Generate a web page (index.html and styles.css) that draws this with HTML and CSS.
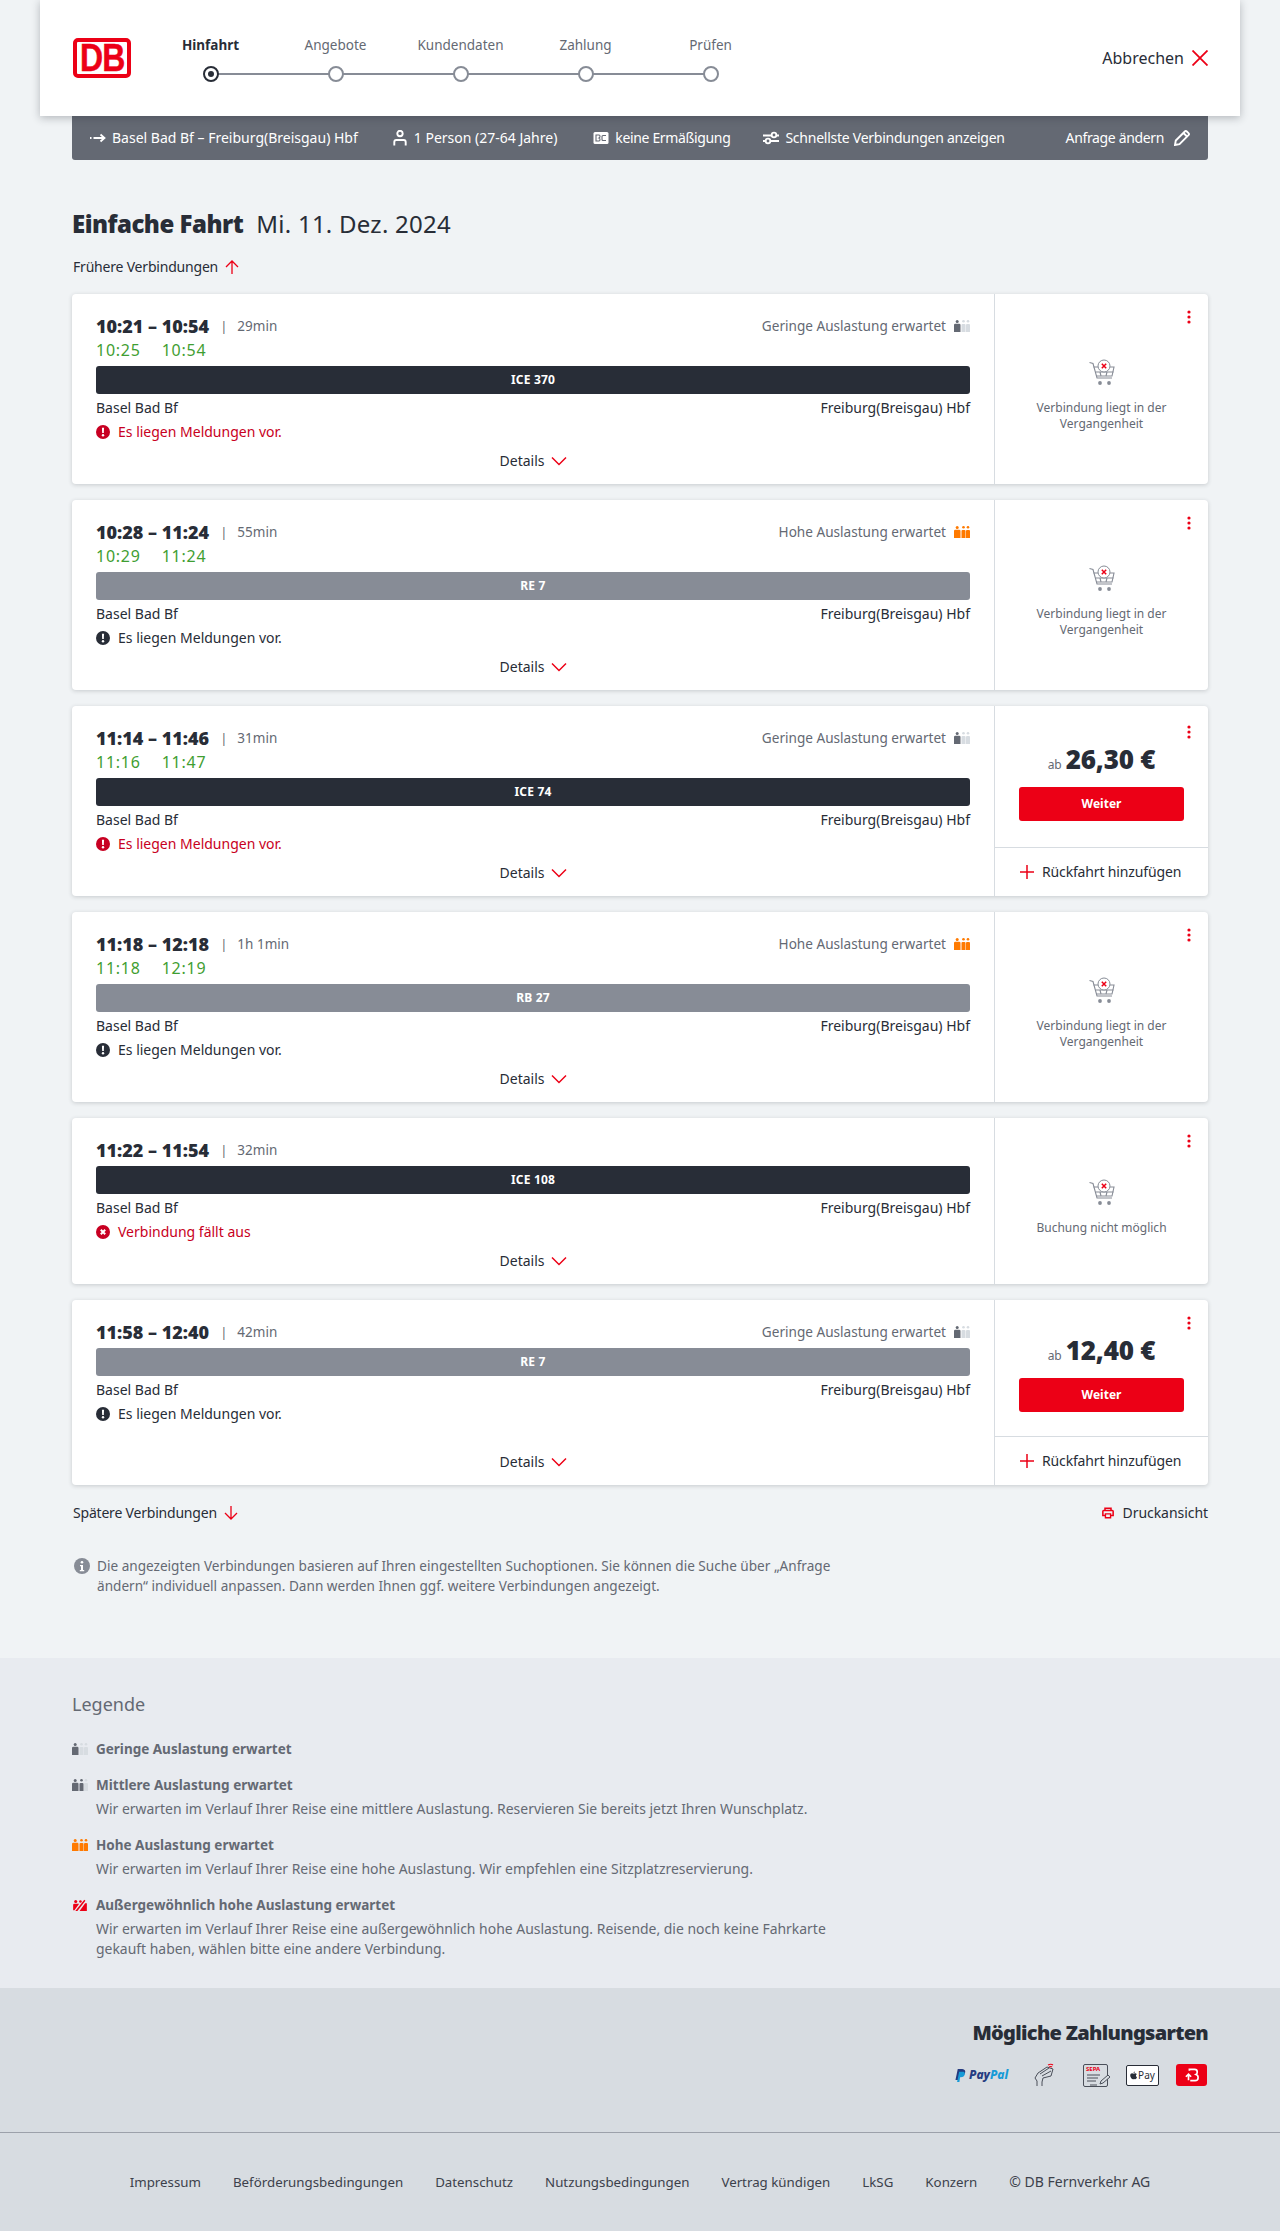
FILE: index.html
```html
<!DOCTYPE html>
<html lang="de">
<head>
<meta charset="utf-8">
<title>Einfache Fahrt</title>
<link rel="stylesheet" href="styles.css">
</head>
<body>
<svg class="defs" width="0" height="0" aria-hidden="true">
  <symbol id="occ" viewBox="0 0 16 12">
    <circle class="o1" cx="3.200" cy="1.500" r="1.500"/><path class="o1" d="M0 5q0-1.300 1.300-1.300h3.900Q6.500 3.700 6.500 5v7H0z"/>
    <circle class="o2" cx="9.500" cy="1.300" r="1.300"/><path class="o2" d="M7.500 5q0-1 1-1h2q1 0 1 1v7h-4z"/>
    <circle class="o3" cx="14" cy="1.300" r="1.300"/><path class="o3" d="M12 5q0-1 1-1h2q1 0 1 1v7h-4z"/>
  </symbol>
  <symbol id="chev" viewBox="0 0 16 10"><path d="M1 1.500l7 7 7-7" fill="none" stroke="#ec0016" stroke-width="1.500"/></symbol>
  <symbol id="kebab" viewBox="0 0 4 14"><circle cx="2" cy="2" r="1.600" fill="#ec0016"/><circle cx="2" cy="7" r="1.600" fill="#ec0016"/><circle cx="2" cy="12" r="1.600" fill="#ec0016"/></symbol>
  <symbol id="warn" viewBox="0 0 14 14"><circle cx="7" cy="7" r="7" fill="currentColor"/><path d="M5.900 2.800h2.200l-.3 5.200H6.200z" fill="#fff"/><circle cx="7" cy="10.200" r="1.200" fill="#fff"/></symbol>
  <symbol id="cancel" viewBox="0 0 14 14"><circle cx="7" cy="7" r="7" fill="currentColor"/><path d="M4.800 4.800l4.400 4.400m0-4.400L4.800 9.200" stroke="#fff" stroke-width="2"/></symbol>
  <symbol id="plus" viewBox="0 0 14 14"><path d="M7 0v14M0 7h14" stroke="#ec0016" stroke-width="1.500"/></symbol>
  <symbol id="cart" viewBox="0 0 26 26">
    <g fill="none" stroke="#878c96" stroke-width="1.100"><path d="M0.500 3.500l3.500 1 4 14.500h15"/><path d="M4.500 8h6m7 0h7.500l-2 9H7.500"/><path d="M6.500 13h18M11 13l1 4m6-4l-1 4"/></g>
    <circle cx="11" cy="24" r="1.900" fill="#878c96"/><circle cx="20" cy="24" r="1.900" fill="#878c96"/>
    <circle cx="15" cy="7" r="6" fill="#fff" stroke="#878c96"/><path d="M12.800 4.800l4.400 4.400m0-4.400l-4.400 4.400" stroke="#ec0016" stroke-width="1.500"/>
  </symbol>
</svg>

<header class="top">
  <div class="logo"><span class="logo-text">DB</span></div>
  <ol class="steps">
    <li class="step step-active"><span class="step-label">Hinfahrt</span><span class="dot dot-active"></span></li>
    <li class="step"><span class="step-label">Angebote</span><span class="dot"></span></li>
    <li class="step"><span class="step-label">Kundendaten</span><span class="dot"></span></li>
    <li class="step"><span class="step-label">Zahlung</span><span class="dot"></span></li>
    <li class="step step-last"><span class="step-label">Prüfen</span><span class="dot"></span></li>
  </ol>
  <a class="cancel-link">Abbrechen
    <svg class="x-icon" viewBox="0 0 16 16"><path d="M0.500 0.500l15 15m0-15l-15 15" stroke="#ec0016" stroke-width="1.800"/></svg>
  </a>
</header>

<div class="wrap">
  <div class="querybar">
    <span class="q q-route"><svg class="q-ic-route" viewBox="0 0 16 10"><path d="M0 5h1.500M3.500 5H14M10.500 1.500L14.500 5l-4 3.500" fill="none" stroke="#fff" stroke-width="1.800"/></svg>Basel Bad Bf – Freiburg(Breisgau) Hbf</span>
    <span class="q q-person"><svg class="q-ic" viewBox="0 0 16 16"><circle cx="8" cy="3.500" r="2.700" fill="none" stroke="#fff" stroke-width="1.900"/><path d="M2.300 15.500V12q0-2 2-2h7.400q2 0 2 2v3.500" fill="none" stroke="#fff" stroke-width="1.900"/></svg>1 Person (27-64 Jahre)</span>
    <span class="q q-card"><svg class="q-ic" viewBox="0 0 16 16"><rect x="0.500" y="2" width="15" height="12" rx="1.500" fill="#fff"/><path d="M3 5h3q1 0 1 1.200v.3q0 1-1 1.500 1 .3 1 1.500 0 1.500-1 1.500H3zM13 5.500H10q-1 0-1 1v3q0 1 1 1h3" fill="none" stroke="#646973" stroke-width="1.100"/></svg>keine Ermäßigung</span>
    <span class="q q-fast"><svg class="q-ic" viewBox="0 0 16 16"><path d="M0 5.500h9M13 5.500h3M0 11h3M7 11h9" stroke="#fff" stroke-width="1.900"/><circle cx="11" cy="5" r="2.300" fill="none" stroke="#fff" stroke-width="1.800"/><circle cx="5" cy="11" r="2.300" fill="none" stroke="#fff" stroke-width="1.800"/></svg>Schnellste Verbindungen anzeigen</span>
    <span class="q q-change">Anfrage ändern<svg class="q-ic" viewBox="0 0 16 16"><path d="M1 15l.8-4.500L10.800 1.500q1-1 2 0l1.700 1.700q1 1 0 2L5.500 14.200zM9.500 3l3.500 3.500" fill="none" stroke="#fff" stroke-width="1.900"/></svg></span>
  </div>

  <h1 class="title"><span class="title-b">Einfache Fahrt</span><span class="title-d">Mi. 11. Dez. 2024</span></h1>

  <a class="more more-top">Frühere Verbindungen
    <svg class="arrow" viewBox="0 0 14 14"><path d="M7 14V1M1 7l6-6 6 6" fill="none" stroke="#ec0016" stroke-width="1.300"/></svg>
  </a>

  <div class="cards">
    <article class="card">
      <div class="main">
        <div class="row-time"><span class="time">10:21 – 10:54</span><span class="sep">|</span><span class="dur">29min</span>
          <span class="occ">Geringe Auslastung erwartet<svg class="occ-ic low"><use href="#occ"/></svg></span></div>
        <div class="row-delay"><span class="d1">10:25</span><span class="d2">10:54</span></div>
        <div class="bar bar-dark">ICE 370</div>
        <div class="stations"><span>Basel Bad Bf</span><span>Freiburg(Breisgau) Hbf</span></div>
        <div class="msg msg-red"><svg class="msg-ic"><use href="#warn"/></svg>Es liegen Meldungen vor.</div>
        <a class="details">Details<svg class="chev"><use href="#chev"/></svg></a>
      </div>
      <aside class="side side-past">
        <svg class="kebab"><use href="#kebab"/></svg>
        <div class="past"><svg class="cart"><use href="#cart"/></svg><p class="past-text">Verbindung liegt in der Vergangenheit</p></div>
      </aside>
    </article>

    <article class="card">
      <div class="main">
        <div class="row-time"><span class="time">10:28 – 11:24</span><span class="sep">|</span><span class="dur">55min</span>
          <span class="occ">Hohe Auslastung erwartet<svg class="occ-ic high"><use href="#occ"/></svg></span></div>
        <div class="row-delay"><span class="d1">10:29</span><span class="d2">11:24</span></div>
        <div class="bar bar-grey">RE 7</div>
        <div class="stations"><span>Basel Bad Bf</span><span>Freiburg(Breisgau) Hbf</span></div>
        <div class="msg"><svg class="msg-ic"><use href="#warn"/></svg>Es liegen Meldungen vor.</div>
        <a class="details">Details<svg class="chev"><use href="#chev"/></svg></a>
      </div>
      <aside class="side side-past">
        <svg class="kebab"><use href="#kebab"/></svg>
        <div class="past"><svg class="cart"><use href="#cart"/></svg><p class="past-text">Verbindung liegt in der Vergangenheit</p></div>
      </aside>
    </article>

    <article class="card">
      <div class="main">
        <div class="row-time"><span class="time">11:14 – 11:46</span><span class="sep">|</span><span class="dur">31min</span>
          <span class="occ">Geringe Auslastung erwartet<svg class="occ-ic low"><use href="#occ"/></svg></span></div>
        <div class="row-delay"><span class="d1">11:16</span><span class="d2">11:47</span></div>
        <div class="bar bar-dark">ICE 74</div>
        <div class="stations"><span>Basel Bad Bf</span><span>Freiburg(Breisgau) Hbf</span></div>
        <div class="msg msg-red"><svg class="msg-ic"><use href="#warn"/></svg>Es liegen Meldungen vor.</div>
        <a class="details">Details<svg class="chev"><use href="#chev"/></svg></a>
      </div>
      <aside class="side">
        <div class="buy">
          <svg class="kebab"><use href="#kebab"/></svg>
          <div class="price"><span class="ab">ab</span><span class="amount">26,30 €</span></div>
          <a class="btn">Weiter</a>
        </div>
        <a class="ret"><svg class="plus"><use href="#plus"/></svg>Rückfahrt hinzufügen</a>
      </aside>
    </article>

    <article class="card">
      <div class="main">
        <div class="row-time"><span class="time">11:18 – 12:18</span><span class="sep">|</span><span class="dur">1h 1min</span>
          <span class="occ">Hohe Auslastung erwartet<svg class="occ-ic high"><use href="#occ"/></svg></span></div>
        <div class="row-delay"><span class="d1">11:18</span><span class="d2">12:19</span></div>
        <div class="bar bar-grey">RB 27</div>
        <div class="stations"><span>Basel Bad Bf</span><span>Freiburg(Breisgau) Hbf</span></div>
        <div class="msg"><svg class="msg-ic"><use href="#warn"/></svg>Es liegen Meldungen vor.</div>
        <a class="details">Details<svg class="chev"><use href="#chev"/></svg></a>
      </div>
      <aside class="side side-past">
        <svg class="kebab"><use href="#kebab"/></svg>
        <div class="past"><svg class="cart"><use href="#cart"/></svg><p class="past-text">Verbindung liegt in der Vergangenheit</p></div>
      </aside>
    </article>

    <article class="card">
      <div class="main">
        <div class="row-time"><span class="time">11:22 – 11:54</span><span class="sep">|</span><span class="dur">32min</span></div>
        <div class="bar bar-dark">ICE 108</div>
        <div class="stations"><span>Basel Bad Bf</span><span>Freiburg(Breisgau) Hbf</span></div>
        <div class="msg msg-red"><svg class="msg-ic"><use href="#cancel"/></svg>Verbindung fällt aus</div>
        <a class="details">Details<svg class="chev"><use href="#chev"/></svg></a>
      </div>
      <aside class="side side-past">
        <svg class="kebab"><use href="#kebab"/></svg>
        <div class="past"><svg class="cart"><use href="#cart"/></svg><p class="past-text">Buchung nicht möglich</p></div>
      </aside>
    </article>

    <article class="card">
      <div class="main">
        <div class="row-time"><span class="time">11:58 – 12:40</span><span class="sep">|</span><span class="dur">42min</span>
          <span class="occ">Geringe Auslastung erwartet<svg class="occ-ic low"><use href="#occ"/></svg></span></div>
        <div class="bar bar-grey">RE 7</div>
        <div class="stations"><span>Basel Bad Bf</span><span>Freiburg(Breisgau) Hbf</span></div>
        <div class="msg"><svg class="msg-ic"><use href="#warn"/></svg>Es liegen Meldungen vor.</div>
        <a class="details">Details<svg class="chev"><use href="#chev"/></svg></a>
      </div>
      <aside class="side">
        <div class="buy">
          <svg class="kebab"><use href="#kebab"/></svg>
          <div class="price"><span class="ab">ab</span><span class="amount">12,40 €</span></div>
          <a class="btn">Weiter</a>
        </div>
        <a class="ret"><svg class="plus"><use href="#plus"/></svg>Rückfahrt hinzufügen</a>
      </aside>
    </article>
  </div>

  <div class="after">
    <a class="more">Spätere Verbindungen
      <svg class="arrow" viewBox="0 0 14 14"><path d="M7 0v13M1 7l6 6 6-6" fill="none" stroke="#ec0016" stroke-width="1.300"/></svg>
    </a>
    <a class="print"><svg class="print-ic" viewBox="0 0 14 14"><path d="M3.500 4V1.500h7V4M3.500 10H1V5q0-1 1-1h10q1 0 1 1v5h-2.500" fill="none" stroke="#ec0016" stroke-width="1.800"/><path d="M4 8h6v4.500H4z" fill="none" stroke="#ec0016" stroke-width="1.600"/></svg>Druckansicht</a>
  </div>

  <div class="info">
    <svg class="info-ic" viewBox="0 0 16 16"><circle cx="8" cy="8" r="8" fill="#878c96"/><circle cx="8" cy="4.300" r="1.300" fill="#fff"/><path d="M6 7h3v5h1.200v1.300H5.800V12H7V8.300H6z" fill="#fff"/></svg>
    <p class="info-text">Die angezeigten Verbindungen basieren auf Ihren eingestellten Suchoptionen. Sie können die Suche über „Anfrage ändern“ individuell anpassen. Dann werden Ihnen ggf. weitere Verbindungen angezeigt.</p>
  </div>
</div>

<section class="legend">
  <div class="wrap">
    <h2 class="legend-title">Legende</h2>
    <div class="leg leg-1"><svg class="leg-ic low"><use href="#occ"/></svg><div><h3 class="leg-h">Geringe Auslastung erwartet</h3></div></div>
    <div class="leg leg-2"><svg class="leg-ic mid"><use href="#occ"/></svg><div><h3 class="leg-h">Mittlere Auslastung erwartet</h3><p class="leg-p">Wir erwarten im Verlauf Ihrer Reise eine mittlere Auslastung. Reservieren Sie bereits jetzt Ihren Wunschplatz.</p></div></div>
    <div class="leg leg-3"><svg class="leg-ic high"><use href="#occ"/></svg><div><h3 class="leg-h">Hohe Auslastung erwartet</h3><p class="leg-p">Wir erwarten im Verlauf Ihrer Reise eine hohe Auslastung. Wir empfehlen eine Sitzplatzreservierung.</p></div></div>
    <div class="leg leg-4"><svg class="leg-ic" viewBox="0 0 16 14"><circle cx="3" cy="3" r="1.800" fill="#ec0016"/><circle cx="8.500" cy="3" r="1.500" fill="#ec0016"/><path d="M0 7q0-1.500 1.500-1.500H7L1.500 13H0zM7.500 14l6.500-9h2v9zM2.500 14L13 1l1.300 1L5 14z" fill="#ec0016"/></svg><div><h3 class="leg-h">Außergewöhnlich hohe Auslastung erwartet</h3><p class="leg-p">Wir erwarten im Verlauf Ihrer Reise eine außergewöhnlich hohe Auslastung. Reisende, die noch keine Fahrkarte gekauft haben, wählen bitte eine andere Verbindung.</p></div></div>
  </div>
</section>

<section class="pay">
  <div class="wrap">
    <h2 class="pay-title">Mögliche Zahlungsarten</h2>
    <div class="pay-icons">
      <span class="pp"><svg class="pp-ic" viewBox="0 0 12 14"><path d="M3 0h5q4 .5 3 4-1 3.500-5 3.500H4.500L3.700 12H0.500z" fill="#253b80"/><path d="M4.500 3h5q2 1 1 3.500T6.500 9H5.500l-.7 5H2.300z" fill="#179bd7"/></svg><span class="pp-a">Pay</span><span class="pp-b">Pal</span></span>
      <svg class="pi-hand" viewBox="0 0 21 24"><g fill="none" stroke="#4a4f59" stroke-width="1"><path d="M1 15l3-5 9-6 6 2-2 7-8 2-1 4M3 23v-5L1 15M8 23v-4"/><path d="M6 11l9-6M8 13l9-5"/></g><path d="M14 2q3-1.500 5 0M15 4q2-1 3 0" fill="none" stroke="#ec0016" stroke-width="1.200"/></svg>
      <span class="sepa"><span class="sepa-t">SEPA</span><svg class="sepa-ic" viewBox="0 0 24 13"><path d="M0 2h13M0 5h11M0 8h9M3 12h7" stroke="#4a4f59"/><path d="M13 11l1-3 7-6 2 2-7 6z" fill="#d7dce1" stroke="#4a4f59"/></svg></span>
      <span class="apple"><svg class="apple-ic" viewBox="0 0 10 12"><path d="M7 .2Q7 2.300 5 2.700 5 .7 7 .2zM5 3.500q1-.6 2.500-.6 1.500 0 2.200 1.300-1.400.9-1.200 2.300 0 1.300 1.500 2-1 3-2.500 3-.8 0-1.500-.4-1 .5-1.700.4C2.500 11.500.3 8.500.3 6 .3 4 1.500 2.900 3 2.900q1 0 2 .6z"/></svg>Pay</span>
      <span class="bahn"><svg class="bahn-ic" viewBox="0 0 18 16"><path d="M6 3V1.500h6q3 0 3 3 0 2-1.500 3 2.500.7 2.500 3.500 0 3.500-3.500 3.500H7M2 10l3-3 3 3M5 7v7" fill="none" stroke="#fff" stroke-width="1.900"/></svg></span>
    </div>
  </div>
</section>

<footer class="foot">
  <nav class="foot-nav">
    <a>Impressum</a><a>Beförderungsbedingungen</a><a>Datenschutz</a><a>Nutzungsbedingungen</a><a>Vertrag kündigen</a><a>LkSG</a><a>Konzern</a><a class="foot-copy">© DB Fernverkehr AG</a>
  </nav>
</footer>
</body>
</html>
```

FILE: styles.css
```css
* { box-sizing: border-box; }
html, body { margin: 0; padding: 0; }
body { background: #f0f3f5; color: #282d37; font: 14px/20px "Noto Sans", sans-serif; }
h1, h2, h3, p, ol { margin: 0; padding: 0; font-weight: inherit; font-size: inherit; }
.defs { position: absolute; }
svg { display: block; flex: none; }
.o1 { fill: var(--o1); } .o2 { fill: var(--o2); } .o3 { fill: var(--o3); }

.top { position: relative; z-index: 2; margin: 0 40px; height: 116px; background: #fff; box-shadow: 0 2px 8px rgba(40,45,55,.3); display: flex; align-items: center; padding: 0 32px 0 33px; }
.logo { width: 58px; height: 40px; border: 4px solid #ec0016; border-radius: 5px; display: flex; align-items: center; justify-content: center; flex: none; }
.logo-text { display: inline-block; color: #ec0016; font: 700 39px/32px "Liberation Sans", sans-serif; letter-spacing: -1px; transform: scaleX(.82); -webkit-text-stroke: .5px #ec0016; }
.steps { list-style: none; display: flex; margin-left: 17px; }
.step { position: relative; width: 125px; display: flex; flex-direction: column; align-items: center; gap: 11px; color: #646973; font-size: 13.5px; line-height: 20px; }
.step::after { content: ""; position: absolute; left: 50%; top: 38px; width: 125px; height: 2px; background: #878c96; }
.step-last::after { display: none; }
.step-active { color: #282d37; font-weight: 700; }
.dot { position: relative; z-index: 1; width: 16px; height: 16px; border-radius: 50%; background: #fff; border: 2px solid #878c96; }
.dot-active { border-color: #282d37; }
.dot-active::after { content: ""; position: absolute; left: 3px; top: 3px; width: 6px; height: 6px; border-radius: 50%; background: #282d37; }
.cancel-link { margin-left: auto; display: flex; align-items: center; gap: 8px; font-size: 16px; }
.x-icon { width: 16px; height: 16px; }

.wrap { width: 1136px; margin: 0 auto; }
.querybar { height: 44px; background: #646973; color: #fff; border-radius: 0 0 3px 3px; display: flex; align-items: center; padding: 0 18px; font-size: 14px; }
.q { display: flex; align-items: center; gap: 6px; white-space: nowrap; }
.q-person { margin-left: 34px; }
.q-card { margin-left: 36px; letter-spacing: -.35px; }
.q-fast { margin-left: 33px; letter-spacing: -.25px; }
.q-change { margin-left: auto; gap: 10px; letter-spacing: -.35px; }
.q-ic { width: 16px; height: 16px; }
.q-ic-route { width: 16px; height: 10px; }

.title { margin-top: 50px; height: 28px; display: flex; align-items: center; gap: 13px; }
.title-b { font: 900 24px/28px "Noto Sans", sans-serif; letter-spacing: -.5px; }
.title-d { font-size: 24px; letter-spacing: .25px; }
.more { display: flex; align-items: center; gap: 7px; font-size: 14px; letter-spacing: -.2px; color: #282d37; }
.more-top { margin: 17px 0 0 1px; height: 24px; }
.arrow { width: 14px; height: 14px; }

.cards { margin-top: 15px; display: flex; flex-direction: column; gap: 16px; }
.card { display: flex; background: #fff; border-radius: 4px; box-shadow: 0 1px 4px rgba(40,45,55,.2); }
.main { width: 922px; flex: none; padding: 20px 24px 10px; display: flex; flex-direction: column; }
.row-time { height: 24px; display: flex; align-items: center; }
.time { font: 900 18px/24px "Noto Sans", sans-serif; }
.sep { margin-left: 11px; color: #646973; font-size: 13px; }
.dur { margin-left: 10px; color: #646973; font-size: 13.5px; }
.occ { margin-left: auto; display: flex; align-items: center; gap: 8px; color: #646973; font-size: 13.6px; }
.occ-ic { width: 16px; height: 12px; }
.low { --o1: #646973; --o2: #d7dce1; --o3: #d7dce1; }
.mid { --o1: #646973; --o2: #646973; --o3: #d7dce1; }
.high { --o1: #ff7a00; --o2: #ff7a00; --o3: #ff7a00; }
.row-delay { height: 24px; display: flex; font-size: 16px; line-height: 24px; letter-spacing: .75px; color: #3f9e32; }
.d2 { margin-left: 21px; }
.bar { margin-top: 4px; height: 28px; border-radius: 3px; color: #fff; font-size: 12px; font-weight: 700; line-height: 28px; letter-spacing: .2px; text-align: center; }
.bar-dark { background: #282d37; }
.bar-grey { background: #878c96; }
.stations { margin-top: 4px; display: flex; justify-content: space-between; height: 20px; }
.msg { margin: 4px 0 6px; height: 20px; display: flex; align-items: center; gap: 8px; color: #282d37; }
.msg-red { color: #c80022; }
.msg-ic { width: 14px; height: 14px; }
.details { margin-top: auto; height: 26px; display: flex; align-items: center; justify-content: center; gap: 7px; padding-left: 1px; }
.chev { width: 16px; height: 10px; }

.side { flex: 1; border-left: 1px solid #d7dce1; display: flex; flex-direction: column; }
.kebab { width: 4px; height: 14px; align-self: flex-end; margin-right: 17px; }
.side-past { padding: 16px 0 17px; }
.past { flex: 1; display: flex; flex-direction: column; align-items: center; justify-content: center; }
.cart { width: 26px; height: 26px; margin-bottom: 15px; }
.past-text { width: 150px; font-size: 12px; line-height: 16px; text-align: center; color: #646973; }
.buy { flex: 1; display: flex; flex-direction: column; justify-content: center; padding: 16px 0 24px; }
.price { margin-top: 5px; height: 30px; display: flex; align-items: baseline; justify-content: center; gap: 4px; }
.ab { font-size: 12px; color: #646973; }
.amount { font: 900 26px/30px "Noto Sans", sans-serif; letter-spacing: -.2px; }
.btn { margin: 13px 0 0 24px; width: 165px; height: 34px; background: #ec0016; color: #fff; font-weight: 700; font-size: 12px; line-height: 34px; text-align: center; border-radius: 3px; }
.ret { height: 49px; border-top: 1px solid #d7dce1; display: flex; align-items: center; gap: 8px; padding-left: 25px; letter-spacing: -.15px; }
.plus { width: 14px; height: 14px; }

.after { margin-top: 16px; height: 24px; display: flex; align-items: center; justify-content: space-between; padding-left: 1px; }
.print { display: flex; align-items: center; gap: 9px; letter-spacing: -.05px; }
.print-ic { width: 12px; height: 12px; }
.info { margin-top: 31px; display: flex; gap: 7px; width: 762px; padding-left: 2px; color: #646973; font-size: 13.6px; }
.info-ic { width: 16px; height: 16px; margin-top: 2px; }

.legend { margin-top: 62px; height: 330px; background: #e8ebf0; color: #646973; }
.legend-title { padding-top: 34px; font-size: 18px; line-height: 24px; }
.leg { display: flex; gap: 8px; }
.leg-1 { margin-top: 23px; }
.leg-2, .leg-3, .leg-4 { margin-top: 16px; }
.leg-ic { width: 16px; height: 12px; margin-top: 4px; }
.leg-h { font-weight: 700; font-size: 13.5px; line-height: 20px; }
.leg-p { margin-top: 4px; font-size: 13.95px; line-height: 20px; width: 760px; }

.pay { height: 145px; background: #d7dce1; border-bottom: 1px solid #9ca1aa; }
.pay-title { padding-top: 33px; text-align: right; font: 900 20px/24px "Noto Sans", sans-serif; letter-spacing: -.7px; color: #282d37; }
.pay-icons { margin-top: 19px; height: 22px; display: flex; align-items: center; justify-content: flex-end; padding-right: 1px; }
.pp { width: 56px; display: flex; align-items: center; gap: 3px; font: italic 800 12px/14px "Noto Sans", sans-serif; }
.pp-ic { width: 11px; height: 13px; }
.pp-a { color: #253b80; }
.pp-b { color: #179bd7; margin-left: -3px; }
.pi-hand { width: 21px; height: 24px; margin-left: 23px; }
.sepa { width: 25px; height: 23px; margin-left: 28px; border: 1px solid #4a4f59; border-radius: 2px; }
.sepa-t { display: block; color: #ec0016; font: 700 6px/8px "Noto Sans", sans-serif; padding-left: 2px; }
.sepa-ic { width: 26px; height: 13px; margin-left: 2px; }
.apple { width: 33px; height: 21px; margin-left: 18px; background: #fff; border: 1px solid #282d37; border-radius: 2px; display: flex; align-items: center; justify-content: center; gap: 1px; font-size: 10px; line-height: 12px; color: #282d37; }
.apple-ic { width: 7px; height: 9px; fill: #282d37; }
.bahn { width: 31px; height: 22px; margin-left: 17px; background: #ec0016; border-radius: 3px; display: flex; align-items: center; justify-content: center; }
.bahn-ic { width: 16px; height: 14px; }

.foot { height: 98px; background: #d7dce1; display: flex; align-items: center; justify-content: center; }
.foot-nav { display: flex; gap: 32px; color: #3c414b; font-size: 13.3px; }
.foot-copy { font-size: 14px; }
```
